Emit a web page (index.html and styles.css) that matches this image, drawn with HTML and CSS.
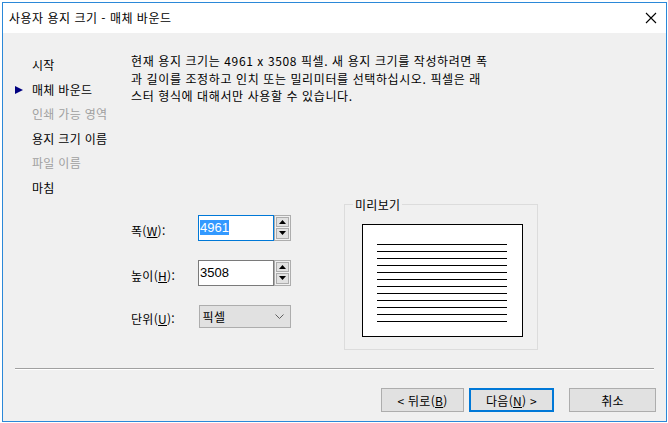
FILE: index.html
```html
<!DOCTYPE html>
<html lang="ko">
<head>
<meta charset="utf-8">
<title>사용자 용지 크기 - 매체 바운드</title>
<link rel="stylesheet" href="styles.css">
</head>
<body>
<div class="window">
  <div class="titlebar">
    <span class="title">사용자 용지 크기 - 매체 바운드</span>
    <svg class="close" width="12" height="12" viewBox="0 0 12 12"><path d="M1 1 L11 11 M11 1 L1 11" stroke="#000" stroke-width="1.1" fill="none"/></svg>
  </div>
  <div class="body">
    <div class="main">
      <ul class="steps">
        <li class="step"><span class="marker"></span>시작</li>
        <li class="step current"><span class="marker"><svg width="8" height="8" viewBox="0 0 8 8"><path d="M0 0 L8 4 L0 8 Z" fill="#000080"/></svg></span>매체 바운드</li>
        <li class="step disabled"><span class="marker"></span>인쇄 가능 영역</li>
        <li class="step"><span class="marker"></span>용지 크기 이름</li>
        <li class="step disabled"><span class="marker"></span>파일 이름</li>
        <li class="step"><span class="marker"></span>마침</li>
      </ul>
      <div class="content">
        <p class="desc">현재 용지 크기는 4961 x 3508 픽셀. 새 용지 크기를 작성하려면 폭<br>과 길이를 조정하고 인치 또는 밀리미터를 선택하십시오. 픽셀은 래<br>스터 형식에 대해서만 사용할 수 있습니다.</p>
        <div class="lower">
          <div class="form">
            <div class="row">
              <span class="label">폭(<u>W</u>):</span>
              <div class="spin-field">
                <div class="input focused"><span class="sel">4961</span></div>
                <div class="spinner">
                  <div class="spin-btn"><svg width="7" height="4" viewBox="0 0 7 4"><path d="M0 4 L3.5 0 L7 4 Z" fill="#000"/></svg></div>
                  <div class="spin-btn"><svg width="7" height="4" viewBox="0 0 7 4"><path d="M0 0 L3.5 4 L7 0 Z" fill="#000"/></svg></div>
                </div>
              </div>
            </div>
            <div class="row">
              <span class="label">높이(<u>H</u>):</span>
              <div class="spin-field">
                <div class="input"><span>3508</span></div>
                <div class="spinner">
                  <div class="spin-btn"><svg width="7" height="4" viewBox="0 0 7 4"><path d="M0 4 L3.5 0 L7 4 Z" fill="#000"/></svg></div>
                  <div class="spin-btn"><svg width="7" height="4" viewBox="0 0 7 4"><path d="M0 0 L3.5 4 L7 0 Z" fill="#000"/></svg></div>
                </div>
              </div>
            </div>
            <div class="row">
              <span class="label">단위(<u>U</u>):</span>
              <div class="combo">
                <span>픽셀</span>
                <svg width="9" height="5" viewBox="0 0 9 5"><path d="M0.5 0.5 L4.5 4.5 L8.5 0.5" stroke="#606060" stroke-width="1" fill="none"/></svg>
              </div>
            </div>
          </div>
          <fieldset class="preview">
            <legend>미리보기</legend>
            <div class="paper">
              <div class="pline"></div><div class="pline"></div><div class="pline"></div><div class="pline"></div>
              <div class="pline"></div><div class="pline"></div><div class="pline"></div><div class="pline"></div>
              <div class="pline"></div><div class="pline"></div><div class="pline"></div><div class="pline"></div>
            </div>
          </fieldset>
        </div>
      </div>
    </div>
    <div class="separator"></div>
    <div class="buttons">
      <button class="btn">&lt; 뒤로(<u>B</u>)</button>
      <button class="btn default">다음(<u>N</u>) &gt;</button>
      <button class="btn cancel">취소</button>
    </div>
  </div>
</div>
</body>
</html>
```
FILE: styles.css
```css
* { box-sizing: border-box; }
html, body { margin: 0; padding: 0; }
body {
  background: #ffffff;
  font-family: "Noto Sans CJK KR", "Liberation Sans", sans-serif;
  font-size: 12px;
  letter-spacing: 0.3px;
  color: #000;
  width: 668px;
  height: 423px;
  overflow: hidden;
}
.window {
  margin: 2px 0 0 2px;
  width: 665px;
  height: 420px;
  border: 1px solid #2b88d8;
  display: flex;
  flex-direction: column;
}
.titlebar {
  height: 30px;
  background: #fff;
  display: flex;
  align-items: center;
  justify-content: space-between;
  padding: 0 8px 0 6px;
}
.title { font-size: 12px; line-height: 16px; letter-spacing: 0.5px; }
.close { display: block; margin-right: 1px; }
.body {
  flex: 1;
  background: #f0f0f0;
  display: flex;
  flex-direction: column;
}
.main {
  height: 335px;
  display: flex;
}
.steps {
  list-style: none;
  margin: 0;
  padding: 20px 0 0 12px;
  width: 128px;
}
.step {
  height: 24.5px;
  line-height: 24.5px;
  display: flex;
  align-items: center;
  white-space: nowrap;
}
.marker {
  width: 17px;
  display: flex;
  align-items: center;
}
.marker svg { display: block; }
.disabled { color: #a0a0a0; }
.content {
  flex: 1;
  padding-top: 19px;
}
.desc {
  margin: 0;
  line-height: 17.5px;
  letter-spacing: 0.6px;
  white-space: nowrap;
}
.lower {
  display: flex;
  margin-top: 93px;
}
.form {
  width: 160px;
  padding-top: 17px;
  display: flex;
  flex-direction: column;
  gap: 19px;
}
.row {
  display: flex;
  align-items: center;
}
.label {
  width: 68px;
  padding-top: 5px;
}
.spin-field { display: flex; }
.input {
  width: 76px;
  height: 26px;
  border: 1px solid #7a7a7a;
  background: #fff;
  font-family: "Liberation Sans", sans-serif;
  font-size: 13px;
  letter-spacing: 0;
  display: flex;
  align-items: center;
  padding-left: 1px;
}
.input.focused { border-color: #0078d7; }
.sel {
  background: #3399ff;
  color: #fff;
  line-height: 15px;
}
.spinner {
  width: 17px;
  height: 26px;
  border: 1px solid #adadad;
  display: flex;
  flex-direction: column;
  gap: 1px;
  padding: 1px;
  background: #f0f0f0;
}
.spin-btn {
  flex: 1;
  background: #e1e1e1;
  border: 1px solid #adadad;
  display: flex;
  align-items: center;
  justify-content: center;
}
.spin-btn svg { display: block; }
.combo {
  width: 93px;
  height: 23px;
  background: #e1e1e1;
  border: 1px solid #adadad;
  display: flex;
  align-items: center;
  justify-content: space-between;
  padding: 0 6px 0 3px;
}
.combo svg { display: block; }
.preview {
  margin: 0 0 0 53px;
  width: 194px;
  height: 152px;
  border: 1px solid #dcdcdc;
  padding: 0 0 0 17px;
}
.preview legend {
  font-size: 12px;
  line-height: 14px;
  padding: 0 2px;
  margin-left: -9px;
}
.paper {
  margin-top: 12px;
  width: 161px;
  height: 113px;
  border: 1px solid #000;
  background: #fff;
  padding: 19px 0 0 14px;
  display: flex;
  flex-direction: column;
  gap: 6px;
}
.pline {
  width: 130px;
  height: 1px;
  background: #000;
}
.separator {
  margin: 0 12px;
  height: 2px;
  border-top: 1px solid #a0a0a0;
  border-bottom: 1px solid #ffffff;
}
.buttons {
  display: flex;
  justify-content: flex-end;
  padding: 18px 10px 0 0;
}
.btn {
  font-family: "Noto Sans CJK KR", "Liberation Sans", sans-serif;
  font-size: 12px;
  letter-spacing: 0.3px;
  width: 83px;
  height: 24px;
  background: #e1e1e1;
  border: 1px solid #adadad;
  padding: 0;
  color: #000;
  margin: 0;
}
.btn.default {
  border: 2px solid #0078d7;
  margin-left: 5px;
  width: 85px;
}
.btn.cancel {
  margin-left: 15px;
  width: 87px;
}
```
